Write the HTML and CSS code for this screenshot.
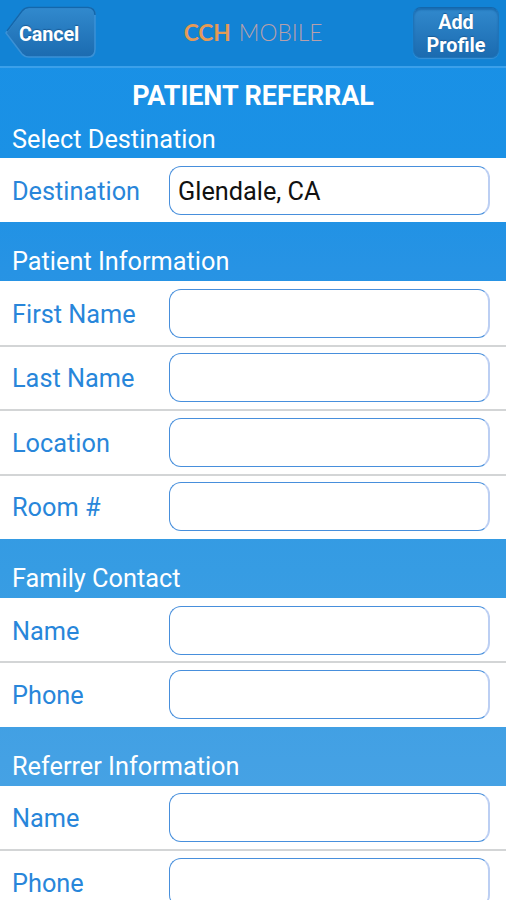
FILE: index.html
```html
<!DOCTYPE html>
<html lang="en">
<head>
<meta charset="utf-8">
<title>CCH Mobile</title>
<link rel="stylesheet" href="styles.css">
</head>
<body>
<header class="bar">
  <a class="cancel">
    <svg class="shape" width="94" height="54" viewBox="0 0 94 54">
      <defs><linearGradient id="g" x1="0" y1="0" x2="0" y2="1"><stop offset="0" stop-color="#3189cd"/><stop offset="1" stop-color="#1b6bb0"/></linearGradient></defs>
      <path d="M2 28 L18 6 Q21 3 25 3 H84 Q91 3 91 10 V44 Q91 52 84 52 H25 Q21 52 18 49 Z" fill="url(#g)" stroke="#3b91d6" stroke-width="1.5"/>
      <path d="M3 26 L18 6 Q21 2.500 25 2.500 H84 Q91 3 91 10" fill="none" stroke="#1467ab" stroke-width="1.5"/>
    </svg>
    <span class="cancel-text">Cancel</span>
  </a>
  <div class="logo"><b>CCH</b><span>MOBILE</span></div>
  <a class="add">Add<br>Profile</a>
</header>
<main>
  <h1>PATIENT REFERRAL</h1>
  <h2 class="first">Select Destination</h2>
  <div class="rows">
    <label class="row"><span>Destination</span><input value="Glendale, CA"></label>
  </div>
  <h2>Patient Information</h2>
  <div class="rows">
    <label class="row"><span>First Name</span><input></label>
    <label class="row"><span>Last Name</span><input></label>
    <label class="row"><span>Location</span><input></label>
    <label class="row"><span>Room #</span><input></label>
  </div>
  <h2>Family Contact</h2>
  <div class="rows">
    <label class="row"><span>Name</span><input></label>
    <label class="row"><span>Phone</span><input></label>
  </div>
  <h2>Referrer Information</h2>
  <div class="rows">
    <label class="row"><span>Name</span><input></label>
    <label class="row"><span>Phone</span><input></label>
  </div>
</main>
</body>
</html>
```
FILE: styles.css
```css
* { box-sizing: border-box; }
html { height: 900px; overflow: hidden; }
body {
  margin: 0;
  height: 900px;
  overflow: hidden;
  font-family: Roboto, sans-serif;
  background: linear-gradient(#1890e6 0, #1b91e5 160px, #2793e4 270px, #369ce3 570px, #44a1e4 760px, #4aa4e4 900px);
}
.bar {
  height: 68px;
  display: flex;
  justify-content: space-between;
  align-items: flex-start;
  padding: 5px 7px 0 4px;
  background: #1283d5;
  border-bottom: 2px solid #3ba0ea;
}
.cancel {
  display: grid;
  width: 94px;
  height: 54px;
  color: #fff;
  font-weight: 700;
  font-size: 19.800px;
  text-shadow: 0 -1px 1px #1a5c98;
}
.shape, .cancel-text { grid-area: 1 / 1; }
.cancel-text { align-self: center; padding: 5px 0 0 15px; letter-spacing: -.1px; }
.logo {
  display: flex;
  gap: 8px;
  margin: 14px 0 0 -5px;
  font-family: Lato, sans-serif;
  font-size: 22.700px;
  line-height: 28px;
  color: #b8a0aa;
  font-weight: 300;
}
.logo b { color: #e59a55; font-weight: 700; }
.add {
  width: 86px;
  height: 51px;
  margin-top: 2px;
  padding-top: 3px;
  border-radius: 8px;
  border: 1px solid #1e74b9;
  border-top-color: #1467ab;
  background: linear-gradient(#3189cd, #1b6bb0);
  box-shadow: inset 0 2px 2px #1b6cb0, 0 1px 1px #3b91d6;
  color: #fff;
  font-size: 19.800px;
  font-weight: 700;
  line-height: 23px;
  text-align: center;
  text-shadow: 0 -1px 1px #1a5c98;
}
h1 {
  height: 53px;
  margin: 0;
  padding-top: 12px;
  color: #fff;
  font-size: 27px;
  line-height: 32px;
  font-weight: 700;
  text-align: center;
  letter-spacing: -.07px;
}
h2 {
  height: 59px;
  margin: 0;
  padding: 24px 0 0 12px;
  color: #fff;
  font-size: 25.300px;
  line-height: 32px;
  font-weight: 400;
}
h2.first { height: 37px; padding-top: 3px; }
.rows { background: #fff; }
.row {
  display: flex;
  height: 64.400px;
  padding: 7.600px 16px 0 12px;
  color: #2886da;
  font-size: 25.300px;
}
.row + .row {
  height: 65.400px;
  margin-top: -1px;
  padding-top: 6.600px;
  border-top: 2px solid #d3d5d6;
}
.row span { width: 157px; line-height: 52.400px; }
input {
  width: 321px;
  height: 49px;
  margin: 0;
  padding: 3px 8px 0;
  border: 1px solid #478fdc;
  border-right: 2px solid #bccff3;
  border-radius: 12px;
  background: #fff;
  color: #111;
  font: 25.300px Roboto, sans-serif;
  outline: none;
}
```
